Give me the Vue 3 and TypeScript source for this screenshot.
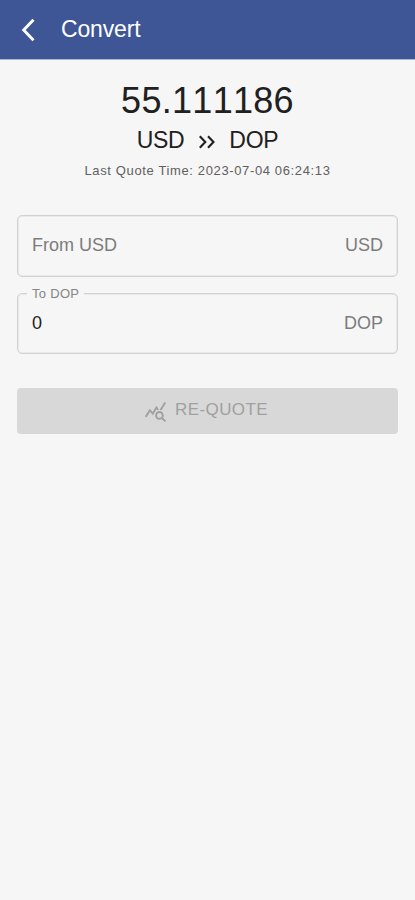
<script setup lang="ts">
import { ref } from 'vue'

const from = ref('USD')
const to = ref('DOP')
const rate = ref('55.111186')
const quoteTime = ref('2023-07-04 06:24:13')
const result = ref('0')
</script>

<template>
  <div class="screen">
    <header class="bar">
      <svg class="back" viewBox="0 0 14 24" fill="none">
        <path d="M12.5 1.8 2.7 12l9.8 10.2" stroke="currentColor" stroke-width="2.9" />
      </svg>
      <h1 class="title">Convert</h1>
    </header>
    <main class="content">
      <section class="quote">
        <div class="rate">{{ rate }}</div>
        <div class="pair">
          <span>{{ from }}</span>
          <svg class="arrows" viewBox="0 0 18 14" fill="none">
            <path d="M1.8 1.2 7.3 7l-5.5 5.8M10 1.2 15.5 7 10 12.8" stroke="currentColor" stroke-width="2.1" />
          </svg>
          <span>{{ to }}</span>
        </div>
        <div class="time">Last Quote Time: {{ quoteTime }}</div>
      </section>
      <div class="field">
        <span class="placeholder">From {{ from }}</span>
        <span class="unit">{{ from }}</span>
      </div>
      <div class="field second">
        <span class="label">To {{ to }}</span>
        <span class="value">{{ result }}</span>
        <span class="unit">{{ to }}</span>
      </div>
      <button class="requote" disabled>
        <svg class="stats" viewBox="0 0 24 24" fill="currentColor">
          <path d="M19.88 18.47c.44-.7.7-1.51.7-2.39 0-2.49-2.01-4.5-4.5-4.5s-4.5 2.01-4.5 4.5 2.01 4.5 4.49 4.5c.88 0 1.7-.26 2.39-.7L21.58 23 23 21.58l-3.12-3.11zm-3.8.11c-1.38 0-2.5-1.12-2.5-2.5s1.12-2.5 2.5-2.5 2.5 1.12 2.5 2.5-1.12 2.5-2.5 2.5zm-.36-8.5c-.74.02-1.45.18-2.1.45l-.55-.83-3.8 6.18-3.01-3.52-3.63 5.81L1 17l5-8 3 3.5L13 6l2.72 4.08zm2.59.5c-.64-.28-1.33-.45-2.05-.49L21.38 2 23 3.18l-4.69 7.4z" />
        </svg>
        <span>RE-QUOTE</span>
      </button>
    </main>
  </div>
</template>

<style>
body {
  background: #f6f6f6;
}
</style>

<style scoped>
.screen {
  min-height: 900px;
  background: #f6f6f6;
  font-family: "Liberation Sans", Arial, sans-serif;
}
.bar {
  box-sizing: border-box;
  height: 60px;
  padding: 0 22px 0 21px;
  display: flex;
  align-items: center;
  color: #fff;
  background: #3e5695;
  border-bottom: 1px solid #a9b4d0;
}
.back {
  width: 14px;
  height: 24px;
}
.title {
  margin: 0 0 2px 26px;
  font-size: 23px;
  font-weight: 400;
  line-height: 28px;
  letter-spacing: -0.15px;
}
.content {
  padding: 0 17px;
}
.quote {
  display: flex;
  flex-direction: column;
  align-items: center;
  color: #202020;
}
.rate {
  margin-top: 19px;
  font-size: 36px;
  line-height: 44px;
  letter-spacing: 0.3px;
  font-kerning: none;
}
.pair {
  display: flex;
  align-items: center;
  height: 32px;
  margin-top: 1px;
  font-size: 23px;
  letter-spacing: -0.3px;
}
.arrows {
  width: 18px;
  height: 14px;
  margin: 3px 13px 0 14px;
}
.time {
  margin-top: 5px;
  font-size: 13px;
  line-height: 20px;
  letter-spacing: 0.63px;
  color: #606060;
}
.field {
  position: relative;
  box-sizing: border-box;
  height: 62px;
  margin-top: 34px;
  padding: 0 14px 2px;
  display: flex;
  align-items: center;
  justify-content: space-between;
  border: 1px solid #d2d2d2;
  border-radius: 5px;
  box-shadow: inset 0 0 0 1px #e9e9e9;
  font-size: 18px;
}
.second {
  height: 61px;
  margin-top: 16px;
  padding-bottom: 0;
}
.placeholder,
.unit {
  color: #7c7c7c;
}
.value {
  color: #222;
}
.label {
  position: absolute;
  top: -8px;
  left: 9px;
  padding: 0 5px;
  font-size: 13px;
  line-height: 16px;
  letter-spacing: 0.3px;
  color: #858585;
  background: #f6f6f6;
}
.requote {
  width: 100%;
  height: 46px;
  margin-top: 34px;
  padding: 0 3px 2px 0;
  display: flex;
  align-items: center;
  justify-content: center;
  gap: 8px;
  border: 0;
  border-radius: 4px;
  background: #d8d8d8;
  color: #a0a0a0;
  font-family: inherit;
  font-size: 17px;
  letter-spacing: 0.4px;
}
.stats {
  width: 23px;
  height: 23px;
  margin-top: 2px;
}
</style>
